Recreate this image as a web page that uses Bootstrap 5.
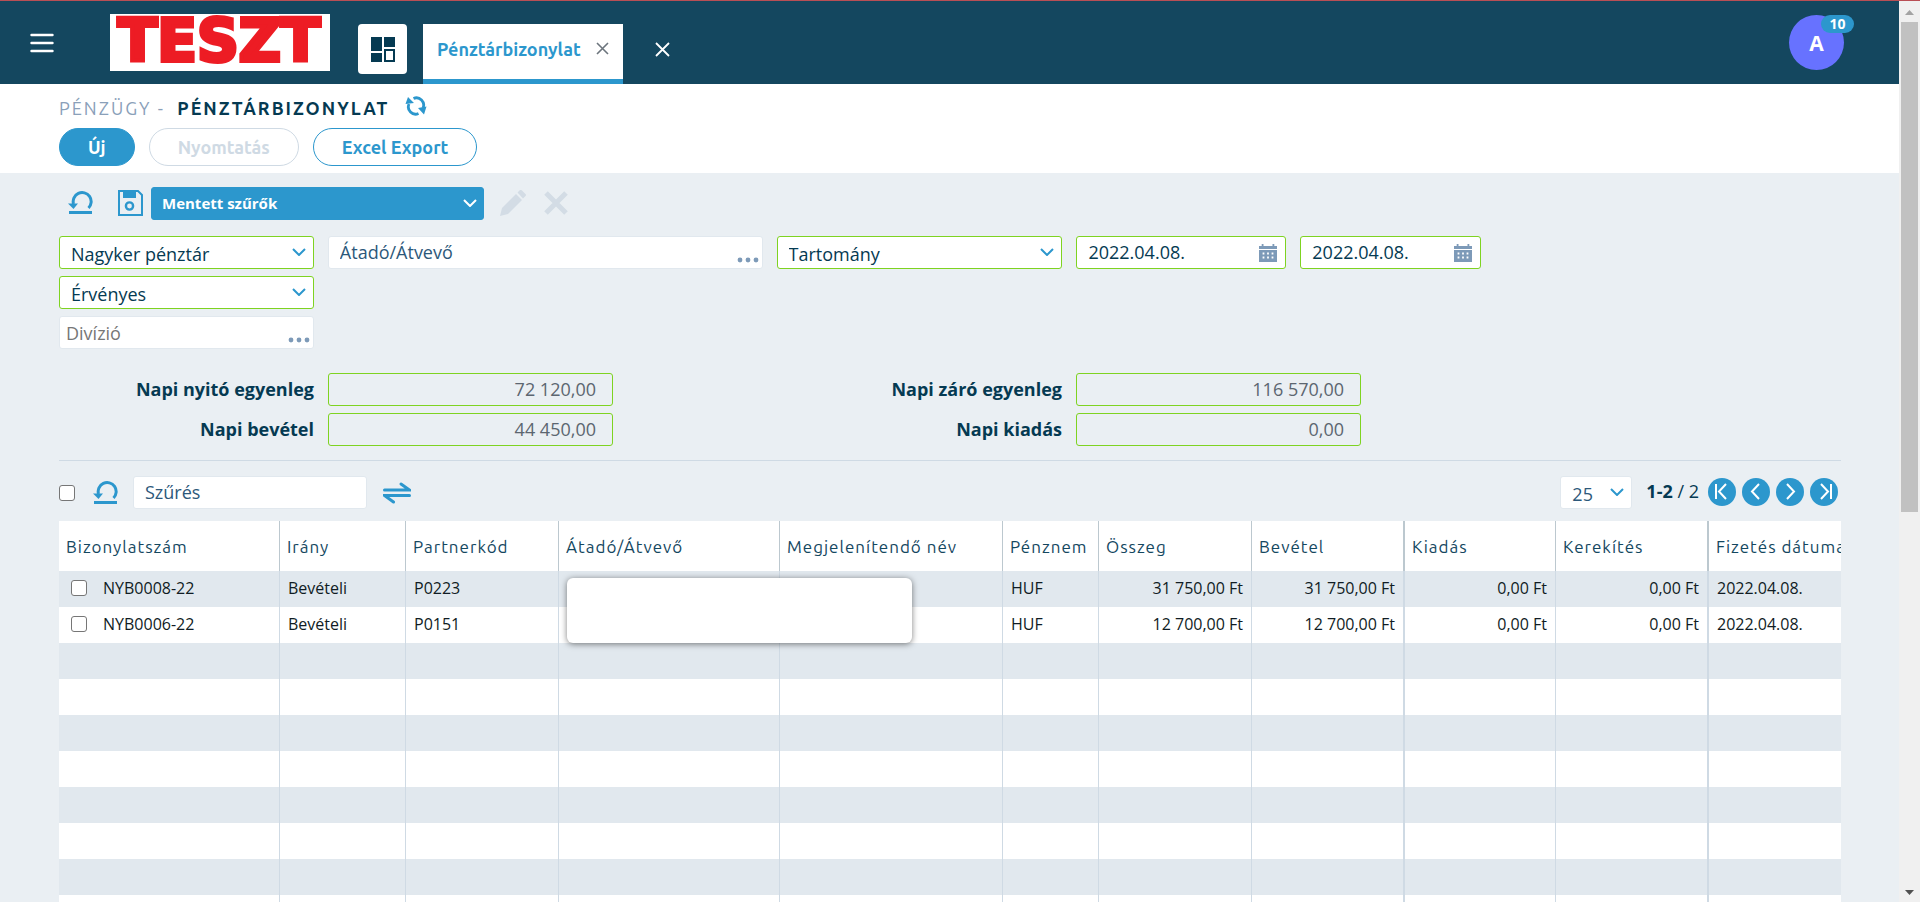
<!DOCTYPE html>
<html lang="hu">
<head>
<meta charset="utf-8">
<meta name="viewport" content="width=device-width, initial-scale=1">
<title>Pénztárbizonylat</title>
<link rel="stylesheet" href="https://cdn.jsdelivr.net/npm/bootstrap@5.3.0/dist/css/bootstrap.min.css">
<style>
:root{--blue:#2c97cd;--navy:#14475f;--ink:#053a52;--green:#7ed321;--line:#cfdae4;--mute:#7d9ab8}
body{font-family:"Open Sans","Noto Sans",sans-serif;font-size:18px;line-height:24px;color:var(--ink);background:#eaeff3;border-top:1px solid #b94f55;overflow:hidden}
.head-font{font-family:Ubuntu,"Noto Sans","Open Sans",sans-serif}
svg{display:block;flex:none}
.bare{border:0;background:none;padding:0;color:inherit}
.blue{color:var(--blue)}
.page-side{min-width:0}
/* top bar */
.topbar{background:var(--navy);height:83px;padding:0 45px 0 30px}
.logo{background:#fff;width:220px;height:57px;margin:13px 28px 0 56px}
.home-btn{width:49px;height:50px;background:#fff;border-radius:4px;color:var(--ink);margin:23px 16px 0 0}
.doc-tab{width:200px;background:#fff;border-bottom:5px solid var(--blue);margin-top:23px;padding:0 14px 6px}
.doc-tab a{font-size:18px;font-weight:600;color:var(--blue);text-decoration:none}
.close-all{padding:14px 0 0 8px}
.avatar{width:55px;height:55px;border-radius:50%;background:#6772ff;color:#fff;font-weight:700;font-size:21px;margin:14px 10px 0 0}
.count{top:0;left:32px;width:33px;height:18px;border-radius:9px;background:var(--blue);font-size:14px;line-height:18px}
/* title */
.title-band{background:#fff;height:89px;padding:12px 59px 0}
.title-band h1{font-size:18px;line-height:24px;letter-spacing:2px;font-weight:700}
.crumb{color:#8aa0b9;font-weight:400}
.pills{gap:14px}
.pill{height:38px;border-radius:19px;border:1px solid var(--blue);background:#fff;color:var(--blue);font-size:18px;font-weight:600;line-height:24px;padding:0 28px 1px}
.pill.main{background:var(--blue);color:#fff}
.pill:disabled{border-color:var(--line);color:var(--line)}
/* filters */
.work{padding:14px 58px 0 59px}
.box{height:33px;border:1px solid #e1e8ee;border-radius:3px;background-color:#fff;color:var(--ink);min-width:0}
.box.ok{border-color:var(--green)}
.box input,input.box{border-radius:3px;outline:0;min-width:0;padding:0 11px 2px}
.box input{border:0;background:none;color:inherit;width:100%}
.box input::placeholder,input.box::placeholder{color:#2c587a;opacity:1}
.box input.gray{padding:1px 6px 0}
.box input.gray::placeholder{color:#777}
select.box{appearance:none;padding:2px 30px 0 11px;background:#fff url("data:image/svg+xml,%3Csvg xmlns='http://www.w3.org/2000/svg' width='14' height='8' fill='none' stroke='%232c97cd' stroke-width='2'%3E%3Cpath d='M1 1l6 6 6-6'/%3E%3C/svg%3E") no-repeat right 7px top 11px}
select.saved{background-color:var(--blue);border-color:var(--blue);color:#fff;font-size:15px;font-weight:700;width:333px;padding:0 30px 1px 10px;background-position:right 6px top 11px;background-image:url("data:image/svg+xml,%3Csvg xmlns='http://www.w3.org/2000/svg' width='14' height='8' fill='none' stroke='%23fff' stroke-width='2'%3E%3Cpath d='M1 1l6 6 6-6'/%3E%3C/svg%3E")}
.tools{margin-left:9px}
.tools .bare{margin-bottom:2px}
.faint{color:#d3dce5}
.filters{display:grid;grid-template-columns:255fr 435fr 286fr 210fr 181fr 346fr;gap:7px 14px}
.filters .first{grid-column:1}
.dots{color:var(--mute);padding:0 3px 5px 0}
.sums{display:grid;grid-template-columns:255fr 285fr 435fr 285fr 466fr;gap:7px 14px;align-items:center}
.sums label{text-align:right;font-weight:700;padding-bottom:2px}
.sums .l1{grid-column:1}
.sums input{background:none;text-align:right;color:#5c6670;padding-right:16px;width:100%}
.rule{border-top:1px solid var(--line);margin:14px 0 15px}
.tick{appearance:none;width:16px;height:16px;border:1px solid #767676;border-radius:3px;background:#fff;margin:0;flex:none}
.reset{margin:0 14px 0 18px}
.quick{width:234px}
.per-page{width:72px;color:#2c587a}
.pager{gap:6px;margin:0 3px 2px 9px}
.range{margin-left:14px;padding-bottom:3px}
.pg{width:28px;height:28px;border-radius:50%;background:var(--blue);color:#fff}
/* data grid */
.grid-wrap{margin-top:12px;overflow:hidden;position:relative}
.data{table-layout:fixed;width:100%;min-width:1801px;background:#fff;border-collapse:separate;border-spacing:0}
.data th,.data td{border-right:1px solid var(--line);white-space:nowrap;overflow:hidden;padding:0 8px 2px}
.data th{height:50px;border-right-color:#bcc8cf;font-size:17px;font-weight:400;letter-spacing:1px;color:var(--navy);padding:1px 0 0 7px}
.data td{height:36px;font-size:16px;color:#101c24}
.data td .tick{margin-left:4px}
.data .thick{border-right-width:2px}
.data tbody tr:nth-child(odd){background:#e1e8ee}
.note{left:508px;top:57px;width:345px;height:65px;background:#fff;border-radius:6px;box-shadow:0 1px 6px rgba(0,0,0,.5)}
/* scroll track */
.track{width:21px;background:#f0f0f0;flex:none}
.thumb{width:17px;height:490px;background:#c1c1c1}
</style>
</head>
<body>
<div class="d-flex vh-100">
<div class="page-side flex-grow-1 overflow-hidden">

<header class="topbar d-flex align-items-start">
  <button class="bare text-white align-self-center" aria-label="Menü"><svg width="24" height="20" fill="none" stroke="currentColor" stroke-width="2.4" stroke-linecap="round"><path d="M1.500 2h21M1.500 10h21M1.500 18h21"/></svg></button>
  <div class="logo"><svg width="220" height="57" role="img" aria-label="TESZT" overflow="visible"><text x="109" y="47" text-anchor="middle" font-family="DejaVu Sans" font-weight="700" font-size="58" fill="#ed1c24" stroke="#ed1c24" stroke-width="4">TESZT</text></svg></div>
  <button class="bare home-btn d-flex align-items-center justify-content-center" aria-label="Kezdőlap"><svg width="24" height="25" fill="currentColor"><path d="M0 0h11v14H0zM13 0h11v10H13zM0 16h11v9H0z"/><path d="M14 13h9v11h-9z" fill="none" stroke="currentColor" stroke-width="2"/></svg></button>
  <div class="doc-tab d-flex align-self-stretch align-items-center justify-content-between">
    <a href="#" class="head-font">Pénztárbizonylat</a>
    <button class="bare text-secondary" aria-label="Fül bezárása"><svg width="13" height="13" stroke="currentColor" stroke-width="1.600"><path d="M1 1l11 11M12 1L1 12"/></svg></button>
  </div>
  <button class="bare text-white align-self-center ms-4 close-all" aria-label="Összes bezárása"><svg width="15" height="15" stroke="currentColor" stroke-width="1.800"><path d="M1 1l13 13M14 1L1 14"/></svg></button>
  <button class="bare avatar position-relative ms-auto" aria-label="Felhasználó">A<span class="count position-absolute">10</span></button>
</header>

<section class="title-band">
  <div class="d-flex head-font">
    <h1 class="mb-0"><span class="crumb">PÉNZÜGY - </span>&nbsp;PÉNZTÁRBIZONYLAT</h1>
    <button class="bare blue ms-3 align-self-start" aria-label="Frissítés"><svg width="22" height="20" fill="none" stroke="currentColor" stroke-width="2.800"><path d="M8.500 2.500Q13 .500 16.500 4T18 12M13.500 17.500Q9 19.500 5.500 16T4 8"/><path d="M13 12l8.500-1.500-2.500 8zM.500 8L3 1l6 6z" fill="currentColor" stroke="none"/></svg></button>
  </div>
  <div class="d-flex head-font mt-2 pills">
    <button class="pill main">Új</button>
    <button class="pill" disabled>Nyomtatás</button>
    <button class="pill">Excel Export</button>
  </div>
</section>

<main class="work">
  <div class="d-flex align-items-center tools">
    <button class="bare blue me-4" aria-label="Szűrők visszaállítása"><svg width="26" height="24" fill="none" stroke="currentColor"><path d="M5.500 13A9 9 0 1 1 20.500 17" stroke-width="3"/><path d="M0 12.500h10l-4.500 5.500z" fill="currentColor" stroke="none"/><path d="M1 21.500h23" stroke-width="3"/></svg></button>
    <button class="bare blue me-2" aria-label="Szűrő mentése"><svg width="25" height="26" fill="none" stroke="currentColor" stroke-width="2"><path d="M1 1h19l4 4v20H1z"/><path d="M5 1h13v7H5z" fill="currentColor" stroke="none"/><circle cx="11.500" cy="16" r="3.600" stroke-width="2.400"/></svg></button>
    <select class="box saved" aria-label="Mentett szűrők"><option>Mentett szűrők</option></select>
    <button class="bare ms-3 faint" aria-label="Szerkesztés"><svg width="26" height="26" fill="currentColor"><path d="M0 26l2-8L16 4l6 6L8 24zM17.500 2.500L20 0q1-.500 2 .500l3.500 3.500q1 1 0 2L23 8.500z"/></svg></button>
    <button class="bare ms-3 faint" aria-label="Törlés"><svg width="28" height="26" stroke="currentColor" stroke-width="5"><path d="M4 3l20 20M24 3L4 23"/></svg></button>
  </div>

  <div class="filters mt-3">
    <select class="box ok" aria-label="Pénztár"><option>Nagyker pénztár</option></select>
    <div class="box d-flex"><input placeholder="Átadó/Átvevő" aria-label="Átadó/Átvevő"><button class="bare align-self-end dots" aria-label="Partner keresése"><svg width="22" height="6" fill="currentColor"><circle cx="3" cy="3" r="2.400"/><circle cx="11" cy="3" r="2.400"/><circle cx="19" cy="3" r="2.400"/></svg></button></div>
    <select class="box ok" aria-label="Időszak"><option>Tartomány</option></select>
    <div class="box ok d-flex align-items-center pe-1"><input value="2022.04.08." aria-label="Kezdő dátum"><button class="bare dots pe-1 pb-0" aria-label="Naptár"><svg width="18" height="18"><use href="#cal"/></svg></button></div>
    <div class="box ok d-flex align-items-center pe-1"><input value="2022.04.08." aria-label="Záró dátum"><button class="bare dots pe-1 pb-0" aria-label="Naptár"><svg width="18" height="18"><use href="#cal"/></svg></button></div>
    <select class="box ok first" aria-label="Állapot"><option>Érvényes</option></select>
    <div class="box first d-flex"><input class="gray" placeholder="Divízió" aria-label="Divízió"><button class="bare align-self-end dots" aria-label="Divízió keresése"><svg width="22" height="6" fill="currentColor"><circle cx="3" cy="3" r="2.400"/><circle cx="11" cy="3" r="2.400"/><circle cx="19" cy="3" r="2.400"/></svg></button></div>
  </div>

  <div class="sums mt-4">
    <label class="l1" for="s1">Napi nyitó egyenleg</label><input id="s1" class="box ok" readonly value="72 120,00">
    <label for="s2">Napi záró egyenleg</label><input id="s2" class="box ok" readonly value="116 570,00">
    <label class="l1" for="s3">Napi bevétel</label><input id="s3" class="box ok" readonly value="44 450,00">
    <label for="s4">Napi kiadás</label><input id="s4" class="box ok" readonly value="0,00">
  </div>

  <div class="rule"></div>

  <div class="d-flex align-items-center">
    <input type="checkbox" class="tick" aria-label="Összes kijelölése">
    <button class="bare blue reset" aria-label="Visszaállítás"><svg width="26" height="24" fill="none" stroke="currentColor"><path d="M5.500 13A9 9 0 1 1 20.500 17" stroke-width="3"/><path d="M0 12.500h10l-4.500 5.500z" fill="currentColor" stroke="none"/><path d="M1 21.500h23" stroke-width="3"/></svg></button>
    <input class="box quick" placeholder="Szűrés" aria-label="Szűrés">
    <button class="bare blue ms-3" aria-label="Csere"><svg width="28" height="22" fill="none" stroke="currentColor" stroke-width="3" stroke-linecap="round"><path d="M1.500 8h25L18 2M26.500 13.500h-25l9 6.500"/></svg></button>
    <select class="box ms-auto per-page" aria-label="Sorok száma"><option>25</option></select>
    <span class="range"><b>1-2</b> / 2</span>
    <div class="d-flex pager">
      <button class="bare pg" aria-label="Első"><svg width="28" height="28" fill="none" stroke="currentColor" stroke-width="2"><path d="M8 6v15M18 6l-7 7.500 7 7.500"/></svg></button>
      <button class="bare pg" aria-label="Előző"><svg width="28" height="28" fill="none" stroke="currentColor" stroke-width="2"><path d="M17 6l-7 7.500 7 7.500"/></svg></button>
      <button class="bare pg" aria-label="Következő"><svg width="28" height="28" fill="none" stroke="currentColor" stroke-width="2"><path d="M11 6l7 7.500-7 7.500"/></svg></button>
      <button class="bare pg" aria-label="Utolsó"><svg width="28" height="28" fill="none" stroke="currentColor" stroke-width="2"><path d="M21 6v15M11 6l7 7.500-7 7.500"/></svg></button>
    </div>
  </div>

  <div class="grid-wrap">
    <table class="data">
      <colgroup><col style="width:221px"><col style="width:126px"><col style="width:153px"><col style="width:221px"><col style="width:223px"><col style="width:96px"><col style="width:153px"><col style="width:153px"><col style="width:151px"><col style="width:153px"><col></colgroup>
      <thead class="head-font"><tr><th>Bizonylatszám</th><th>Irány</th><th>Partnerkód</th><th>Átadó/Átvevő</th><th>Megjelenítendő név</th><th>Pénznem</th><th>Összeg</th><th class="thick">Bevétel</th><th>Kiadás</th><th class="thick">Kerekítés</th><th>Fizetés dátuma</th></tr></thead>
      <tbody>
        <tr><td><div class="d-flex align-items-center gap-3"><input type="checkbox" class="tick" aria-label="NYB0008-22"><span>NYB0008-22</span></div></td><td>Bevételi</td><td>P0223</td><td></td><td></td><td>HUF</td><td class="text-end">31 750,00 Ft</td><td class="text-end thick">31 750,00 Ft</td><td class="text-end">0,00 Ft</td><td class="text-end thick">0,00 Ft</td><td>2022.04.08.</td></tr>
        <tr><td><div class="d-flex align-items-center gap-3"><input type="checkbox" class="tick" aria-label="NYB0006-22"><span>NYB0006-22</span></div></td><td>Bevételi</td><td>P0151</td><td></td><td></td><td>HUF</td><td class="text-end">12 700,00 Ft</td><td class="text-end thick">12 700,00 Ft</td><td class="text-end">0,00 Ft</td><td class="text-end thick">0,00 Ft</td><td>2022.04.08.</td></tr>
        <tr><td></td><td></td><td></td><td></td><td></td><td></td><td></td><td class="thick"></td><td></td><td class="thick"></td><td></td></tr>
        <tr><td></td><td></td><td></td><td></td><td></td><td></td><td></td><td class="thick"></td><td></td><td class="thick"></td><td></td></tr>
        <tr><td></td><td></td><td></td><td></td><td></td><td></td><td></td><td class="thick"></td><td></td><td class="thick"></td><td></td></tr>
        <tr><td></td><td></td><td></td><td></td><td></td><td></td><td></td><td class="thick"></td><td></td><td class="thick"></td><td></td></tr>
        <tr><td></td><td></td><td></td><td></td><td></td><td></td><td></td><td class="thick"></td><td></td><td class="thick"></td><td></td></tr>
        <tr><td></td><td></td><td></td><td></td><td></td><td></td><td></td><td class="thick"></td><td></td><td class="thick"></td><td></td></tr>
        <tr><td></td><td></td><td></td><td></td><td></td><td></td><td></td><td class="thick"></td><td></td><td class="thick"></td><td></td></tr>
        <tr><td></td><td></td><td></td><td></td><td></td><td></td><td></td><td class="thick"></td><td></td><td class="thick"></td><td></td></tr>
      </tbody>
    </table>
    <div class="note position-absolute"></div>
  </div>
</main>
</div>

<div class="track d-flex flex-column align-items-center" aria-hidden="true">
  <svg width="9" height="21"><path d="M0 14l4.500-5L9 14z" fill="#a3a3a3"/></svg>
  <div class="thumb"></div>
  <svg class="mt-auto" width="9" height="17"><path d="M0 4h9L4.500 9z" fill="#505050"/></svg>
</div>
</div>

<svg width="0" height="0" class="position-absolute"><defs><symbol id="cal" viewBox="0 0 20 18" preserveAspectRatio="none"><path fill="currentColor" fill-rule="evenodd" d="M0 2h3V0h2v2h10V0h2v2h3v3H0zM0 6h20v12H0zM4 8.500v2h2v-2zM9 8.500v2h2v-2zM14 8.500v2h2v-2zM4 12.500v2h2v-2zM9 12.500v2h2v-2zM14 12.500v2h2v-2z"/></symbol></defs></svg>
<script src="https://cdn.jsdelivr.net/npm/bootstrap@5.3.0/dist/js/bootstrap.bundle.min.js"></script>
</body>
</html>
